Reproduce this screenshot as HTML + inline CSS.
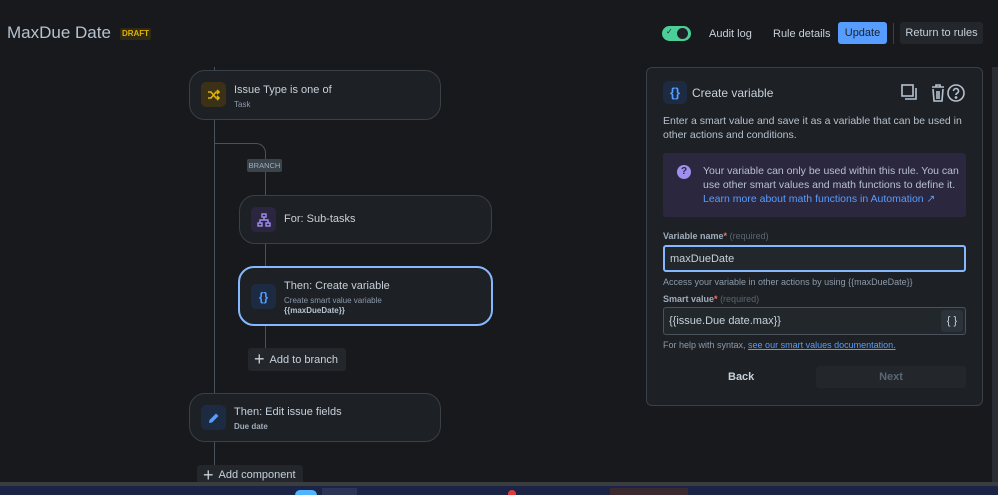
<!DOCTYPE html>
<html><head><meta charset="utf-8"><style>
*{box-sizing:border-box;margin:0;padding:0}
body{width:998px;height:495px;background:#17191c;font-family:"Liberation Sans",sans-serif;color:#b6c2cf;position:relative;overflow:hidden}
.a{position:absolute;white-space:nowrap}
.card{position:absolute;background:#1d2024;border:1px solid #3a4048;border-radius:16px}
.ic{position:absolute;width:25px;height:25px;border-radius:5px;display:flex;align-items:center;justify-content:center}
.t1{position:absolute;font-size:11px;color:#c7d1db}
.t2{position:absolute;font-size:8px;color:#8c9bab}
.vl{position:absolute;width:1px;background:#4a535c}
.btn{position:absolute;background:#23272c;border-radius:3px;color:#c7d1db;font-size:11px;display:flex;align-items:center;white-space:nowrap}
.small{font-size:10.5px;line-height:14px;white-space:normal}
</style></head><body>
<div class="a" style="left:7px;top:23px;font-size:17px;color:#b6c2cf">MaxDue Date</div>
<div class="a" style="left:120px;top:28px;width:31px;height:12px;background:#2e2a14;border-radius:2px;color:#e2b203;font-size:8px;font-weight:bold;text-align:center;line-height:12px">DRAFT</div>

<div class="a" style="left:662px;top:26px;width:29px;height:15px;background:#4bce97;border-radius:8px"><div class="a" style="left:15px;top:2px;width:11px;height:11px;border-radius:50%;background:#1d2125"></div><div class="a" style="left:4px;top:1px;font-size:8px;color:#1d2125">✓</div></div>
<div class="a" style="left:709px;top:28px;font-size:11px;color:#c7d1db">Audit log</div>
<div class="a" style="left:773px;top:28px;font-size:11px;color:#c7d1db">Rule details</div>
<div class="a" style="left:838px;top:22px;width:49px;height:22px;background:#579dff;border-radius:3px;color:#1d2125;font-size:11px;text-align:center;line-height:22px">Update</div>
<div class="a" style="left:893px;top:23px;width:1px;height:21px;background:#3a4048"></div>
<div class="a" style="left:900px;top:22px;width:83px;height:22px;background:#23272c;border-radius:3px;color:#c7d1db;font-size:11px;text-align:center;line-height:22px">Return to rules</div>

<div class="vl" style="left:214px;top:67px;height:416px"></div>
<div class="a" style="left:214px;top:143px;width:52px;height:60px;border-top:1px solid #4a535c;border-right:1px solid #4a535c;border-top-right-radius:10px"></div>
<div class="a" style="left:247px;top:159px;width:35px;height:13px;background:#3b434b;border-radius:2px;color:#9fadbc;font-size:7.5px;text-align:center;line-height:13px">BRANCH</div>
<div class="vl" style="left:265px;top:240px;height:110px"></div>

<div class="card" style="left:189px;top:70px;width:252px;height:50px">
<div class="ic" style="left:11px;top:11px;background:#3a3117"><svg width="14" height="12" viewBox="0 0 14 12" fill="none" stroke="#e2b203" stroke-width="1.6"><path d="M1 3h3l5 6h3M1 9h3l5-6h3M10 1l2 2-2 2M10 7l2 2-2 2"/></svg></div>
<div class="t1" style="left:44px;top:13px">Issue Type is one of</div><div class="t2" style="left:44px;top:29px">Task</div></div>

<div class="card" style="left:239px;top:195px;width:253px;height:49px">
<div class="ic" style="left:11px;top:11px;background:#2b2540"><svg width="14" height="14" viewBox="0 0 14 14" fill="none" stroke="#9f8fef" stroke-width="1.4"><rect x="5" y="1" width="4" height="3"/><rect x="1" y="10" width="4" height="3"/><rect x="9" y="10" width="4" height="3"/><path d="M7 4v3M3 10V7h8v3"/></svg></div>
<div class="t1" style="left:44px;top:17px">For: Sub-tasks</div></div>

<div class="card" style="left:238px;top:266px;width:255px;height:60px;border:2px solid #85b8ff">
<div class="ic" style="left:11px;top:16px;background:#1c2b41;color:#579dff;font-size:12px;font-weight:bold">{}</div>
<div class="t1" style="left:44px;top:12px">Then: Create variable</div><div class="t2" style="left:44px;top:28px">Create smart value variable</div><div class="t2" style="left:44px;top:38px;color:#b6c2cf;font-weight:bold">{{maxDueDate}}</div></div>

<div class="btn" style="left:248px;top:348px;width:98px;height:23px"><span style="font-size:18px;margin:0 5px 0 6px">+</span>Add to branch</div>

<div class="card" style="left:189px;top:393px;width:252px;height:49px">
<div class="ic" style="left:11px;top:11px;background:#1c2b41"><svg width="12" height="12" viewBox="0 0 12 12"><path d="M1 11l.5-3L8 1.5l2.5 2.5L4 10.5z" fill="#579dff"/></svg></div>
<div class="t1" style="left:44px;top:12px">Then: Edit issue fields</div><div class="t2" style="left:44px;top:28px;font-weight:bold;color:#9fadbc">Due date</div></div>

<div class="btn" style="left:197px;top:465px;width:106px;height:20px"><span style="font-size:18px;margin:0 5px 0 6px">+</span>Add component</div>

<div class="a" style="left:992px;top:67px;width:6px;height:416px;background:#2a2d31"></div>

<div class="a" style="left:646px;top:67px;width:337px;height:339px;background:#1d2024;border:1px solid #3a4048;border-radius:6px">
<div class="ic" style="left:16px;top:13px;width:24px;height:23px;background:#1c2b41;color:#579dff;font-size:13px;font-weight:bold">{}</div>
<div class="a" style="left:45px;top:18px;font-size:12px;color:#c7d1db">Create variable</div>
<svg class="a" style="left:254px;top:15px" width="64" height="20" viewBox="0 0 64 20" fill="none" stroke="#b6c2cf" stroke-width="1.6"><rect x="1" y="2" width="11" height="11"/><path d="M4 16h11V5"/><path d="M31 4h12M35 4V2h4v2M32 6l1 12h8l1-12M36 8v8M38 8v8"/><circle cx="55" cy="10" r="8"/><path d="M52.5 8a2.5 2.5 0 1 1 3.5 2.3c-.8.4-1 1-1 1.7"/><circle cx="55" cy="14.5" r=".6" fill="#b6c2cf"/></svg>
<div class="a small" style="left:16px;top:46px;width:310px;color:#b6c2cf">Enter a smart value and save it as a variable that can be used in other actions and conditions.</div>
<div class="a" style="left:16px;top:85px;width:303px;height:64px;background:#2b273f;border-radius:3px">
<div class="a" style="left:14px;top:12px;width:14px;height:14px;border-radius:50%;background:#9f8fef;color:#2b273f;font-size:10px;font-weight:bold;text-align:center;line-height:14px">?</div>
<div class="a small" style="left:40px;top:11px;width:260px;color:#b6c2cf">Your variable can only be used within this rule. You can use other smart values and math functions to define it.<br><span style="color:#579dff">Learn more about math functions in Automation ↗</span></div></div>
<div class="a" style="left:16px;top:163px;font-size:9px;font-weight:bold;color:#9fadbc">Variable name<span style="color:#f87168">*</span> <span style="font-weight:normal;color:#596773">(required)</span></div>
<div class="a" style="left:16px;top:177px;width:303px;height:27px;border:2px solid #85b8ff;border-radius:3px;background:#22272b;font-size:11px;color:#c7d1db;padding:6px 0 0 5px">maxDueDate</div>
<div class="a" style="left:16px;top:209px;font-size:9px;color:#8c9bab">Access your variable in other actions by using {{maxDueDate}}</div>
<div class="a" style="left:16px;top:226px;font-size:9px;font-weight:bold;color:#9fadbc">Smart value<span style="color:#f87168">*</span> <span style="font-weight:normal;color:#596773">(required)</span></div>
<div class="a" style="left:16px;top:239px;width:303px;height:28px;border:1px solid #4a535c;border-radius:3px;background:#22272b;font-size:11px;color:#c7d1db;padding:7px 0 0 5px">{{issue.Due date.max}}<div class="a" style="left:277px;top:2px;width:22px;height:22px;background:#2c333a;border-radius:3px;text-align:center;line-height:22px;font-size:11px">{ }</div></div>
<div class="a" style="left:16px;top:272px;font-size:9px;color:#8c9bab">For help with syntax, <span style="color:#579dff;text-decoration:underline">see our smart values documentation.</span></div>
<div class="a" style="left:81px;top:303px;font-size:11px;font-weight:bold;color:#c7d1db">Back</div>
<div class="a" style="left:169px;top:298px;width:150px;height:22px;background:#23272c;border-radius:3px;color:#596773;font-size:11px;font-weight:bold;text-align:center;line-height:22px">Next</div>
</div>

<div class="a" style="left:0;top:482px;width:998px;height:4px;background:#3a3c40"></div>
<div class="a" style="left:0;top:486px;width:998px;height:9px;background:#1b2444"></div>
<div class="a" style="left:295px;top:490px;width:22px;height:5px;background:#4fb3ff;border-radius:5px 5px 0 0"></div>
<div class="a" style="left:322px;top:488px;width:35px;height:7px;background:#2c3556"></div>
<div class="a" style="left:508px;top:490px;width:8px;height:5px;background:#e23a3a;border-radius:4px 4px 0 0"></div>
<div class="a" style="left:610px;top:488px;width:78px;height:7px;background:#3a2a30"></div>
</body></html>
